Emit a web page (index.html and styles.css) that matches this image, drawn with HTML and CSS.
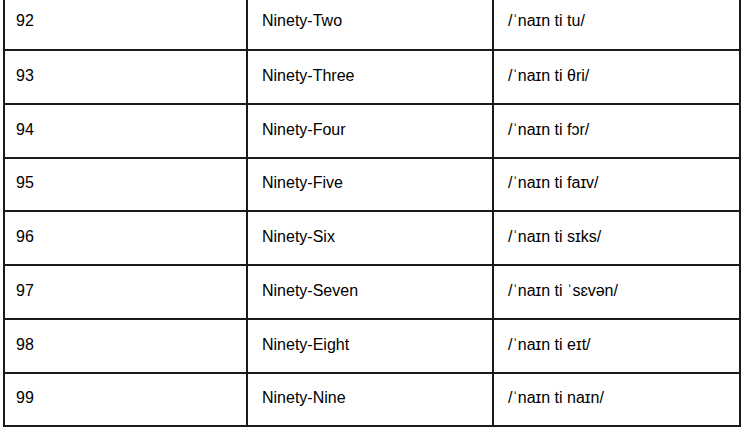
FILE: index.html
```html
<!DOCTYPE html>
<html>
<head>
<meta charset="utf-8">
<link rel="stylesheet" href="styles.css">
</head>
<body>
<div class="table">
  <div class="cell num">92</div><div class="cell">Ninety-Two</div><div class="cell">/ˈnaɪn ti tu/</div>
  <div class="cell num">93</div><div class="cell">Ninety-Three</div><div class="cell">/ˈnaɪn ti θri/</div>
  <div class="cell num">94</div><div class="cell">Ninety-Four</div><div class="cell">/ˈnaɪn ti fɔr/</div>
  <div class="cell num">95</div><div class="cell">Ninety-Five</div><div class="cell">/ˈnaɪn ti faɪv/</div>
  <div class="cell num">96</div><div class="cell">Ninety-Six</div><div class="cell">/ˈnaɪn ti sɪks/</div>
  <div class="cell num">97</div><div class="cell">Ninety-Seven</div><div class="cell">/ˈnaɪn ti ˈsɛvən/</div>
  <div class="cell num">98</div><div class="cell">Ninety-Eight</div><div class="cell">/ˈnaɪn ti eɪt/</div>
  <div class="cell num">99</div><div class="cell">Ninety-Nine</div><div class="cell">/ˈnaɪn ti naɪn/</div>
</div>
</body>
</html>
```

FILE: styles.css
```css
html, body {
  margin: 0;
  padding: 0;
  background: #fff;
  overflow: hidden;
}
body {
  font-family: "Liberation Sans", Arial, sans-serif;
  font-size: 16px;
  color: #000;
}
.table {
  display: grid;
  grid-template-columns: 243px 246px 247px;
  grid-template-rows: 56px 54px 54px 53px 54px 54px 54px 53px;
  margin: -7px 0 0 3px;
  width: max-content;
  border-left: 2px solid #1a1a1a;
  border-top: 2px solid #1a1a1a;
}
.cell {
  box-sizing: border-box;
  border-right: 2px solid #1a1a1a;
  border-bottom: 2px solid #1a1a1a;
  display: flex;
  align-items: center;
  padding: 0 0 3px 14px;
  white-space: nowrap;
}
.cell.num {
  padding-left: 11px;
}
```
